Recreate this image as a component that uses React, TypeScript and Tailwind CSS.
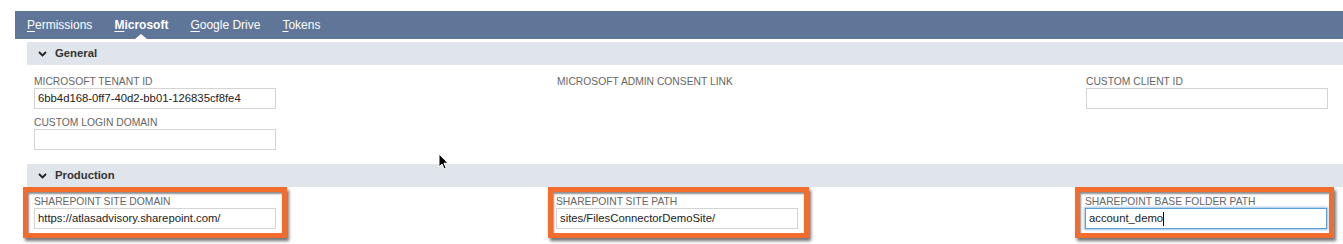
import React from 'react'

const font = { fontFamily: '"Liberation Sans", Arial, sans-serif' }

function Tab({ first, rest, active }: { first: string; rest: string; active?: boolean }) {
  return (
    <div className={`relative h-full flex items-center px-[11px] text-[12px] text-white ${active ? 'font-bold' : ''}`}>
      <span>
        <span className="underline underline-offset-[2px]">{first}</span>
        {rest}
      </span>
      {active && (
        <span className="absolute bottom-0 left-1/2 -translate-x-1/2 w-0 h-0 border-l-[6px] border-r-[6px] border-b-[5px] border-l-transparent border-r-transparent border-b-white" />
      )}
    </div>
  )
}

function SectionHeader({ title }: { title: string }) {
  return (
    <div className="h-[23px] bg-[#e0e4eb] flex items-center pl-[11px] text-[11.3px] font-bold text-[#333]">
      <svg width="9" height="6" viewBox="0 0 9 6" className="mr-[8px]">
        <path d="M1 1l3.5 3.5L8 1" fill="none" stroke="#222" strokeWidth="1.8" />
      </svg>
      {title}
    </div>
  )
}

function Field({
  label,
  value,
  focused,
  box,
}: {
  label: string
  value?: string
  focused?: boolean
  box?: string
}) {
  return (
    <div className="relative w-[242px]">
      {box && (
        <div
          className={`absolute ${box} border-[5px] border-[#f26c2e] shadow-[2px_3px_3px_rgba(0,0,0,0.55),inset_1px_2px_2px_rgba(0,0,0,0.45)] pointer-events-none`}
        />
      )}
      <div className="relative h-[13px] text-[10.3px] leading-[13px] text-[#666] whitespace-nowrap">{label}</div>
      <div
        className={`relative h-[21px] flex items-center pl-[3px] text-[11.3px] text-[#222] bg-white whitespace-nowrap ${
          focused
            ? 'border border-[#5b9dd9] shadow-[0_0_2px_1px_rgba(91,157,217,0.6)]'
            : 'border border-[#d4d4d4]'
        }`}
      >
        {value}
        {focused && <span className="inline-block w-px h-[14px] bg-black" />}
      </div>
    </div>
  )
}

export default function App() {
  return (
    <div className="relative w-[1343px] h-[244px] bg-white overflow-hidden pt-[11px] pl-[15px]" style={font}>
      <div className="h-[28px] bg-[#5f7698] flex items-center pl-[1px]">
        <Tab first="P" rest="ermissions" />
        <Tab first="M" rest="icrosoft" active />
        <Tab first="G" rest="oogle Drive" />
        <Tab first="T" rest="okens" />
      </div>

      <div className="mt-[3px] pl-[12px]">
        <SectionHeader title="General" />
        <div className="pl-[7px] pt-[10px] pb-[14px] grid grid-cols-[522px_530px_242px]">
          <div className="flex flex-col gap-[7px]">
            <Field label="MICROSOFT TENANT ID" value="6bb4d168-0ff7-40d2-bb01-126835cf8fe4" />
            <Field label="CUSTOM LOGIN DOMAIN" />
          </div>
          <div className="text-[10.3px] leading-[13px] text-[#666] pl-px">MICROSOFT ADMIN CONSENT LINK</div>
          <div>
            <Field label="CUSTOM CLIENT ID" />
          </div>
        </div>

        <SectionHeader title="Production" />
        <div className="pl-[7px] pt-[8px] grid grid-cols-[522px_530px_242px]">
          <Field
            label="SHAREPOINT SITE DOMAIN"
            value="https://atlasadvisory.sharepoint.com/"
            box="-left-[11px] -right-[11px] -top-[8px] -bottom-[9px]"
          />
          <Field
            label="SHAREPOINT SITE PATH"
            value="sites/FilesConnectorDemoSite/"
            box="-left-[8px] -right-[11px] -top-[8px] -bottom-[9px]"
          />
          <div className="-ml-px">
            <Field
              label="SHAREPOINT BASE FOLDER PATH"
              value="account_demo"
              focused
              box="-left-[10px] -right-[7px] -top-[8px] -bottom-[9px]"
            />
          </div>
        </div>
      </div>

      <svg className="absolute left-[438px] top-[153px]" width="11" height="18" viewBox="0 0 11 18">
        <path d="M1 1v13l3-3 2.2 5 2-1-2.2-4.8H10z" fill="#000" stroke="#fff" strokeWidth="1" />
      </svg>
    </div>
  )
}
